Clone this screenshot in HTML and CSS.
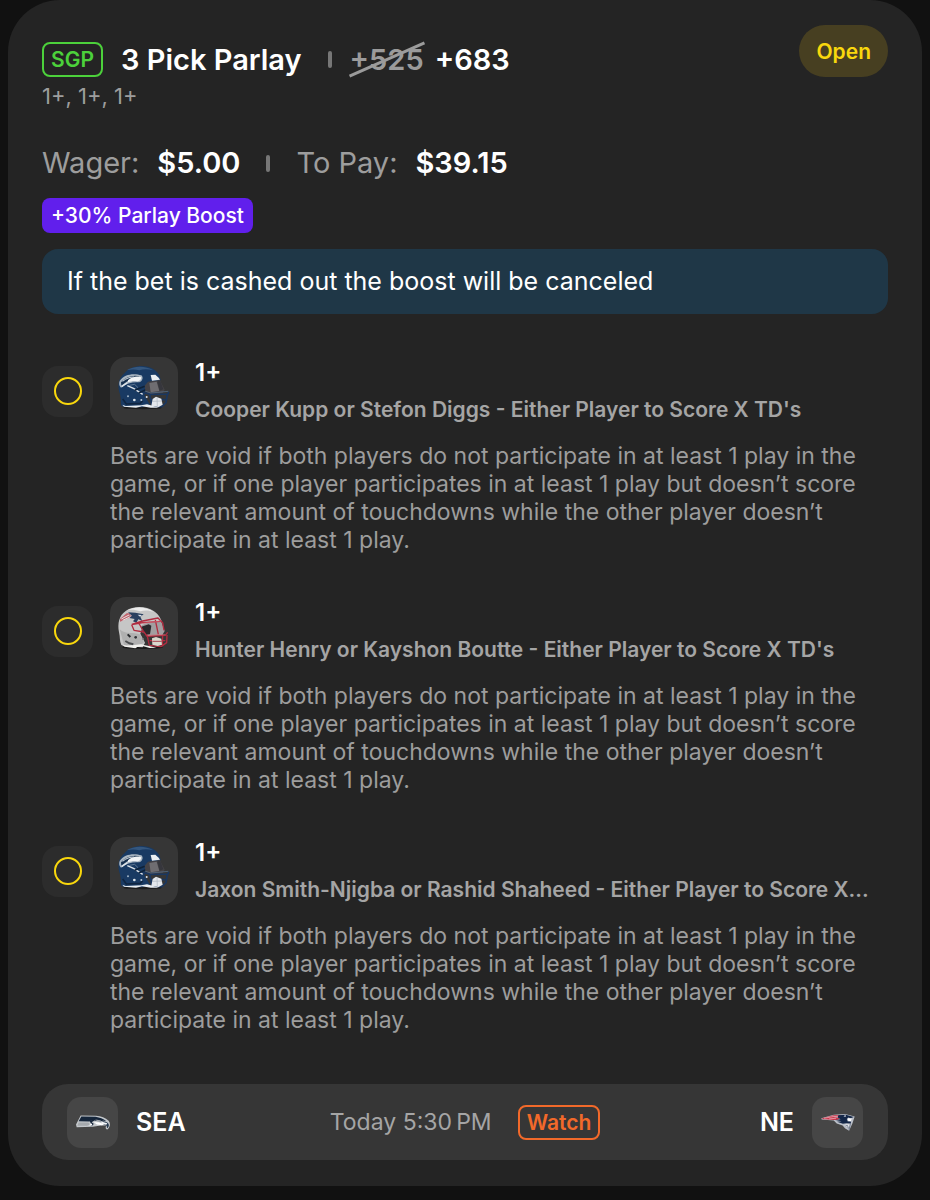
FILE: index.html
```html
<!DOCTYPE html>
<html lang="en">
<head>
<meta charset="utf-8">
<meta name="viewport" content="width=device-width, initial-scale=1">
<title>3 Pick Parlay</title>
<link rel="stylesheet" href="styles.css">
</head>
<body>

<!-- shared artwork -->
<svg class="defs" width="0" height="0" aria-hidden="true">
	<symbol id="helmet-sea" viewBox="0 6 204 204">
		<ellipse cx="98" cy="158" rx="58" ry="5" fill="#1c1c1c"/>
		<path d="M34 152C31 140 34 132 30 118C22 94 23 70 45 53C66 30 106 28 130 42C144 51 150 62 152 76L118 80L106 92L104 122L120 150L96 157L42 156Z" fill="#193a63"/>
		<path d="M50 46C72 31 108 32 130 46C114 42 100 42 88 46C74 42 62 43 50 46Z" fill="#34577f"/>
		<path d="M104 92L114 80L150 76L164 104L158 114L122 118L106 110Z" fill="#444246"/>
		<path d="M118 84L140 80L148 108L122 112Z" fill="#6f6d71"/>
		<path d="M142 79L151 78L160 103L149 107Z" fill="#36363c"/>
		<path d="M29 78C42 56 74 54 94 61C101 67 98 78 88 82C70 80 50 84 33 98C26 92 27 84 29 78Z" fill="#a9b5c1"/>
		<path d="M33 82C50 64 74 59 89 65C78 67 66 69 56 76L34 92Z" fill="#16304f"/>
		<path d="M54 76C66 64 83 62 94 67C94 76 87 80 79 79C70 77 64 80 54 82Z" fill="#f2f4f6"/>
		<path d="M38 79C48 70 60 66 72 66" fill="none" stroke="#d7dee5" stroke-width="3"/>
		<path d="M34 92L53 80L51 86L36 97Z" fill="#dfe4e9"/>
		<path d="M122 60L136 59L146 68L150 74L126 77Z" fill="#e9eef2"/>
		<path d="M52 92L72 101L98 118" fill="none" stroke="#dce2e8" stroke-width="4"/>
		<path d="M58 91L74 88L84 98" fill="none" stroke="#8195ab" stroke-width="2"/>
		<path d="M74 106L104 94M86 114L106 105" fill="none" stroke="#0e2239" stroke-width="5"/>
		<path d="M100 112L120 118L174 117L176 110M119 118L126 153L155 155L168 143L172 118M123 134L166 134" fill="none" stroke="#1a3760" stroke-width="5" stroke-linejoin="round"/>
		<path d="M105 108L122 114L175 109" fill="none" stroke="#5a7594" stroke-width="2"/>
		<path d="M128 132L138 125L154 131L158 149L146 156L124 153Z" fill="#e4e7eb"/>
		<path d="M126 139L156 138M141 128L142 153" stroke="#aab3bd" stroke-width="2"/>
		<path d="M37 149L47 153L94 151L111 148L122 151L147 158L122 158L96 154L78 158L42 155Z" fill="#e9edf1"/>
		<path d="M38 132L49 147L91 145L98 138" fill="none" stroke="#102540" stroke-width="5"/>
		<circle cx="54" cy="124" r="3" fill="#9fb2c6"/>
		<circle cx="73" cy="135" r="4" fill="#dfe5eb"/>
		<circle cx="94" cy="135" r="3" fill="#b9c8d7"/>
		<circle cx="110" cy="126" r="3" fill="#dfe5eb"/>
	</symbol>
	<symbol id="helmet-ne" viewBox="0 6 204 204">
		<ellipse cx="98" cy="157" rx="61" ry="5" fill="#191919"/>
		<path d="M34 150C28 139 31 126 27 112C22 85 27 61 48 47C72 31 109 33 131 48C146 58 151 69 156 80L113 86L98 96L91 116L105 143L98 157L42 154Z" fill="#c6c6c6"/>
		<path d="M53 45C76 33 112 35 132 52C119 45 103 45 91 49C78 44 66 43 53 45Z" fill="#ececec"/>
		<path d="M29 103C46 120 73 110 91 119L102 142L91 151L42 150Z" fill="#b0b0b0"/>
		<path d="M95 91L117 82L154 80L164 108L157 120L116 124L97 112Z" fill="#a29ea0"/>
		<path d="M92 96L116 88L124 92L120 118L104 120Z" fill="#29282b"/>
		<path d="M30 72L50 55L66 55L57 61L68 62L60 68L50 72L30 80Z" fill="#c0606a"/>
		<path d="M34 72L57 60M38 76L62 65" stroke="#e6e2e2" stroke-width="3"/>
		<path d="M54 52L76 53L101 58L91 65L97 78L85 73L79 83L69 79L74 72L58 69L66 62Z" fill="#2a4060"/>
		<path d="M83 59L96 60L90 65Z" fill="#dce1e8"/>
		<path d="M65 88L98 78L144 69L158 83L162 106M65 89L72 106L102 111L111 124L166 121L173 112M66 89L99 83L151 79M86 84L100 108M136 75L145 118M111 119L118 151L153 155L170 143L171 120M119 137L166 137M158 120L157 153" fill="none" stroke="#b22c40" stroke-width="4" stroke-linejoin="round"/>
		<path d="M98 85L153 78M112 121L166 119" fill="none" stroke="#dc6874" stroke-width="2"/>
		<path d="M126 130L138 126L154 131L156 149L143 153L127 149Z" fill="#dad7cd"/>
		<path d="M127 139L155 139" stroke="#a64550" stroke-width="3"/>
		<path d="M38 149L50 152L93 148L105 151L117 153L139 158L119 159L100 154L82 156L76 160L44 155Z" fill="#f2f1ee"/>
		<path d="M46 138L58 145L70 148" fill="none" stroke="#4d4f51" stroke-width="6"/>
		<path d="M53 118L61 126" stroke="#292b2e" stroke-width="6"/>
		<circle cx="77" cy="127" r="4" fill="#303236"/>
		<circle cx="99" cy="132" r="3" fill="#77797c"/>
	</symbol>
	<symbol id="logo-sea" viewBox="0 0 102 46">
		<path d="M14 2L60 3C76 4 88 9 98 18C104 26 103 36 94 44C88 42 88 37 91 32L75 32L50 36L2 37L0 29Z" fill="#c3c7cb"/>
		<path d="M16 5L59 6C71 8 82 12 91 19L69 15L49 16L40 20L8 19Z" fill="#15263b"/>
		<path d="M8 23L37 23L42 29L33 33L4 33Z" fill="#a5a9ad"/>
		<path d="M41 20L52 12L72 11L84 19L71 19L55 17L47 22L53 27L50 33L44 34L46 27Z" fill="#16253a"/>
		<path d="M53 22L68 22L85 28L78 31L63 29Z" fill="#fff"/>
		<path d="M58 14L73 16L77 20L64 20Z" fill="#99a0a7"/>
		<path d="M79 19C91 19 96 23 98 28C100 34 96 38 93 40L92 33L83 30Z" fill="#26384d"/>
		<path d="M76 20L94 25L91 30L78 28Z" fill="#f1f3f5"/>
		<path d="M39 31L47 26L50 33Z" fill="#fff"/>
	</symbol>
	<symbol id="logo-ne" viewBox="0 0 102 52">
		<path d="M0 13L38 2L73 0L102 8L95 29L85 51L73 44L65 35L47 29L38 20L1 17Z" fill="#b9bec7"/>
		<path d="M3 13L38 4L64 3L48 10L37 11L58 12L48 18L37 18L3 15Z" fill="#c9344a"/>
		<path d="M8 13L36 8L53 7M24 15L45 13" fill="none" stroke="#efc8cd" stroke-width="2"/>
		<path d="M52 4L75 2L99 9L90 13L82 11L78 16L81 23L91 22L90 29L77 28L66 30L48 24L62 22L43 18L59 16L50 11Z" fill="#142748"/>
		<path d="M81 13L93 14L90 23L82 21Z" fill="#fff"/>
		<path d="M70 34L78 31L88 32L84 43L77 38Z" fill="#e1e4e9"/>
		<path d="M74 36L80 35L83 44M89 29L85 48" fill="none" stroke="#4b586e" stroke-width="2"/>
		<path d="M68 8L73 3L76 8Z" fill="#fff"/>
	</symbol>
</svg>

<div class="card">
	<div class="header">
		<div class="heading">
			<span class="tag sgp">SGP</span>
			<h1>3 Pick Parlay</h1>
			<span class="divider"></span>
			<del>+525</del>
			<strong>+683</strong>
		</div>
		<span class="status">Open</span>
	</div>
	<div class="picks">1+, 1+, 1+</div>

	<div class="amounts">
		<span class="label">Wager:</span>
		<strong>$5.00</strong>
		<span class="divider"></span>
		<span class="label">To Pay:</span>
		<strong>$39.15</strong>
	</div>
	<div class="boost">+30% Parlay Boost</div>
	<div class="notice">If the bet is cashed out the boost will be canceled</div>

	<div class="legs">
		<div class="leg">
			<div class="leg-status"><span></span></div>
			<div class="helmet"><svg><use href="#helmet-sea"/></svg></div>
			<div class="leg-title">
				<h2>1+</h2>
				<h3>Cooper Kupp or Stefon Diggs - Either Player to Score X TD's</h3>
			</div>
			<p>Bets are void if both players do not participate in at least 1 play in the game, or if one player participates in at least 1 play but doesn’t score the relevant amount of touchdowns while the other player doesn’t participate in at least 1 play.</p>
		</div>
		<div class="leg">
			<div class="leg-status"><span></span></div>
			<div class="helmet"><svg><use href="#helmet-ne"/></svg></div>
			<div class="leg-title">
				<h2>1+</h2>
				<h3>Hunter Henry or Kayshon Boutte - Either Player to Score X TD's</h3>
			</div>
			<p>Bets are void if both players do not participate in at least 1 play in the game, or if one player participates in at least 1 play but doesn’t score the relevant amount of touchdowns while the other player doesn’t participate in at least 1 play.</p>
		</div>
		<div class="leg">
			<div class="leg-status"><span></span></div>
			<div class="helmet"><svg><use href="#helmet-sea"/></svg></div>
			<div class="leg-title">
				<h2>1+</h2>
				<h3>Jaxon Smith-Njigba or Rashid Shaheed - Either Player to Score X...</h3>
			</div>
			<p>Bets are void if both players do not participate in at least 1 play in the game, or if one player participates in at least 1 play but doesn’t score the relevant amount of touchdowns while the other player doesn’t participate in at least 1 play.</p>
		</div>
	</div>

	<div class="game">
		<div class="team">
			<span class="logo"><svg><use href="#logo-sea"/></svg></span>
			SEA
		</div>
		<div class="kickoff">
			<span>Today 5:30&#8239;PM</span>
			<button type="button" class="tag watch">Watch</button>
		</div>
		<div class="team away">
			NE
			<span class="logo"><svg><use href="#logo-ne"/></svg></span>
		</div>
	</div>
</div>

</body>
</html>
```
FILE: styles.css
```css
* {
	box-sizing: border-box;
}

body {
	margin: 0;
	padding: 0 8px 14px;
	background: #111;
	color: #fff;
	font-family: Inter, sans-serif;
}

h1, h2, h3, p {
	margin: 0;
}

.defs {
	position: absolute;
}

.card {
	padding: 25px 34px 26px;
	background: #242424;
	border-radius: 52px;
}

/* header */

.header {
	display: flex;
	justify-content: space-between;
	height: 52px;
}

.heading, .amounts {
	display: flex;
	align-items: center;
	font-size: 29px;
	line-height: 36px;
}

.heading {
	padding-top: 17px;
}

h1 {
	margin-left: 18px;
	font-size: 29px;
	font-weight: 600;
}

strong {
	font-weight: 600;
}

.tag {
	height: 35px;
	padding: 0 7px;
	border: 2px solid;
	border-radius: 8px;
	background: none;
	font: 600 21px/31px Inter, sans-serif;
}

.sgp {
	color: #4cd13b;
}

.divider {
	width: 4px;
	height: 17px;
	margin: 0 18px 0 26px;
	border-radius: 2px;
	background: #777;
}

del {
	position: relative;
	margin-right: 11px;
	color: #9b9b9b;
	font-weight: 600;
	text-decoration: none;
}

del::after {
	content: "";
	position: absolute;
	left: -4px;
	right: -4px;
	top: 16px;
	height: 3px;
	background: #9b9b9b;
	transform: rotate(-24deg);
}

.status {
	height: 52px;
	padding: 0 17px;
	border-radius: 26px;
	background: #473f21;
	color: #f9d70d;
	font-size: 21px;
	font-weight: 600;
	line-height: 53px;
}

.picks, .label, .notice, .leg p, .kickoff {
	font-optical-sizing: none;
}

.picks {
	margin-top: 5px;
	color: #9d9d9d;
	font-size: 22px;
	line-height: 28px;
}

.amounts {
	margin-top: 35px;
}

.amounts .label {
	margin-right: 18px;
	color: #9d9d9d;
}

.amounts .divider {
	margin: 0 26px;
}

.boost {
	width: fit-content;
	margin-top: 17px;
	padding: 0 9px;
	border-radius: 8px;
	background: #611fec;
	font-size: 21px;
	font-weight: 500;
	line-height: 35px;
}

.notice {
	margin-top: 16px;
	padding: 0 25px;
	border-radius: 16px;
	background: #1f3747;
	font-size: 25px;
	line-height: 65px;
}

/* legs */

.legs {
	display: grid;
	gap: 43px;
	margin-top: 43px;
}

.leg {
	display: grid;
	grid-template-columns: 51px 68px minmax(0, 1fr);
	column-gap: 17px;
	row-gap: 17px;
	align-items: center;
}

.leg-status {
	display: grid;
	place-items: center;
	height: 51px;
	border-radius: 16px;
	background: #2c2c2c;
}

.leg-status span {
	width: 28px;
	height: 28px;
	border: 2px solid #f9d70d;
	border-radius: 50%;
}

.helmet {
	height: 68px;
	border-radius: 16px;
	background: #363636;
}

.helmet svg {
	display: block;
	width: 68px;
	height: 68px;
}

h2 {
	font-size: 24px;
	font-weight: 600;
	line-height: 32px;
}

h3 {
	overflow: hidden;
	color: #a5a5a5;
	font-size: 21px;
	font-weight: 600;
	line-height: 42px;
	margin-bottom: -6px;
	text-overflow: ellipsis;
	white-space: nowrap;
}

.leg p {
	grid-column: 2 / -1;
	color: #9d9d9d;
	font-size: 23px;
	line-height: 28px;
}

/* game */

.game {
	display: grid;
	grid-template-columns: 1fr auto 1fr;
	align-items: center;
	height: 76px;
	margin-top: 50px;
	padding: 0 25px;
	border-radius: 26px;
	background: #363636;
}

.team, .kickoff {
	display: flex;
	align-items: center;
}

.team {
	gap: 18px;
	font-size: 25px;
	font-weight: 600;
}

.away {
	justify-content: flex-end;
}

.logo {
	display: grid;
	place-items: center;
	width: 51px;
	height: 51px;
	border-radius: 14px;
	background: #464646;
}

.logo svg {
	width: 34px;
	height: 17px;
}

.kickoff {
	gap: 26px;
	color: #a5a5a5;
	font-size: 23px;
}

.watch {
	color: #f2692a;
}
```
